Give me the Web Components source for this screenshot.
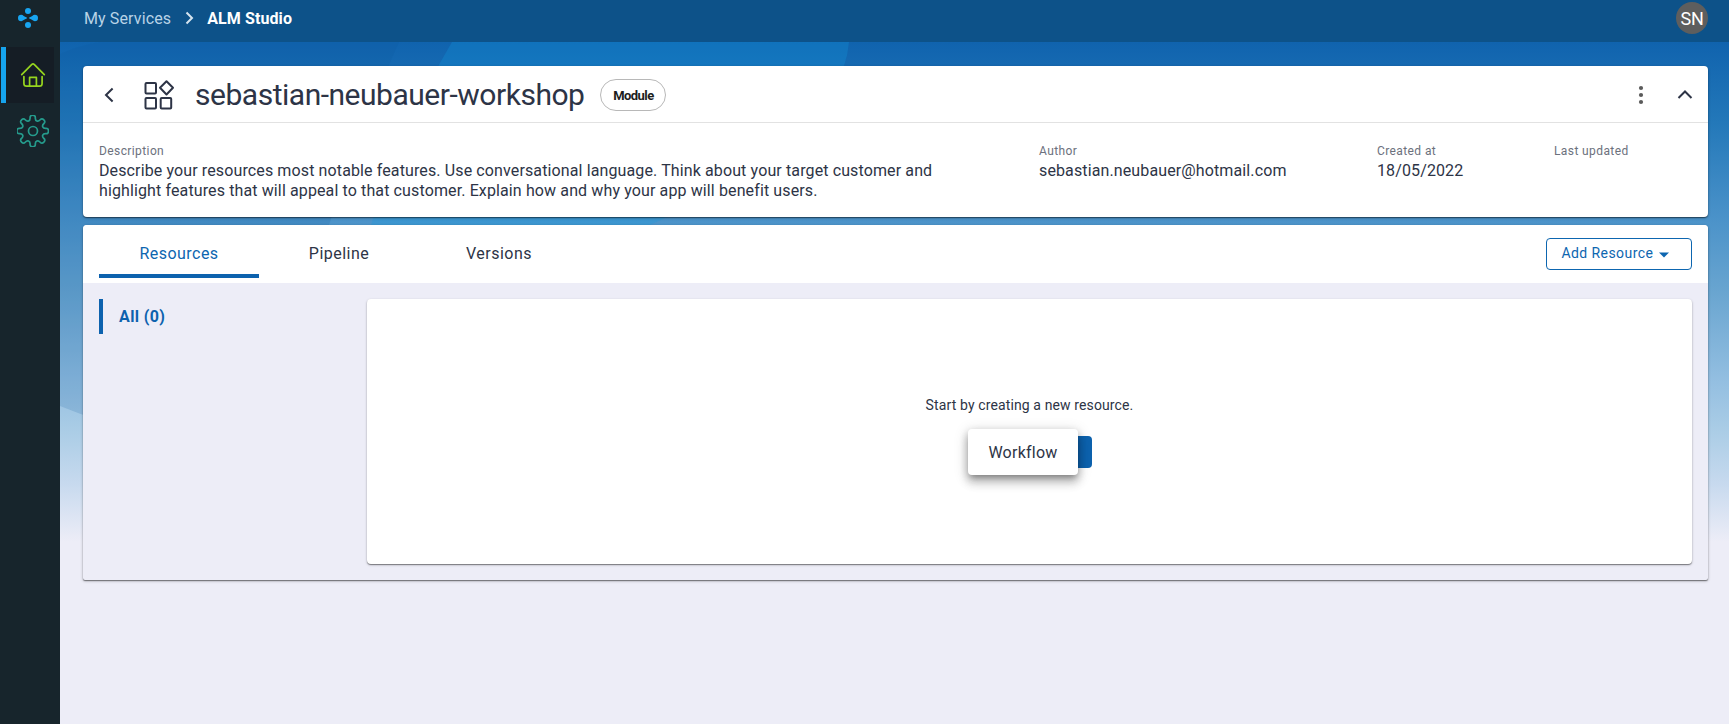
<!DOCTYPE html>
<html lang="en"><head><meta charset="utf-8"><title>ALM Studio</title>
<style>
html,body{margin:0;height:100%;overflow:hidden}
body{font-family:Roboto,"Liberation Sans",sans-serif;color:#2d3748;background:#ededf7}
</style></head><body>
<studio-app></studio-app>
<script>
const define=(name,html)=>customElements.define(name,class extends HTMLElement{
  constructor(){super();this.attachShadow({mode:'open'}).innerHTML='<style>*{box-sizing:border-box}svg{display:block}</style>'+html;}
});

define('side-nav',`<style>
:host{display:flex;flex-direction:column;width:60px;height:100%;background:#17252c;flex:none}
.logo{height:47px;padding:8px 0 0 18px}
.item{height:56px;margin-left:1px;width:53px;border-left:5px solid transparent;padding:12px 0 0 11px}
.on{background:#151d25;border-color:#16a4ee}
</style>
<div class="logo"><svg width="20" height="20" viewBox="0 0 20 20" fill="#18a5f1"><circle cx="10" cy="3" r="3"/><circle cx="10" cy="17" r="3"/><path d="M3.2 6.8C5 6.8 6.300 8.900 8.700 9.500Q9.400 10 8.700 10.500C6.300 11.100 5 13.200 3.200 13.200A3.200 3.200 0 0 1 3.200 6.800ZM16.800 6.800C15 6.800 13.700 8.900 11.300 9.500Q10.600 10 11.300 10.500C13.700 11.100 15 13.200 16.800 13.200A3.200 3.200 0 0 0 16.800 6.800Z"/></svg></div>
<div class="item on"><svg width="32" height="32" viewBox="0 0 32 32" fill="none" stroke="#96d51f" stroke-width="1.700" stroke-linecap="round" stroke-linejoin="round"><path d="M4.700 15.700L14.600 5.600Q16 4.300 17.400 5.600L27.300 15.700M6.900 17.500V24.500Q6.900 27.200 9.600 27.200H22.400Q25.100 27.200 25.100 24.500V17.500M12.600 27V18.400H19.400V27"/></svg></div>
<div class="item"><svg width="32" height="32" viewBox="0 0 32 32" fill="none" stroke="#259b8c" stroke-width="1.700" stroke-linejoin="round"><circle cx="16" cy="16" r="4.500"/><path id="g"/></svg></div>`);

define('crumb-bar',`<style>
:host{display:flex;align-items:center;height:42px;flex:none;background:#0d5289;padding:0 21px 6px 24px;color:#fff;font-size:16px}
.a{color:#b8d3e6;letter-spacing:.12px}.b{font-weight:700;letter-spacing:.1px}
svg{margin:0 13px 0 14px}
.av{margin-left:auto;width:32px;height:32px;border-radius:50%;background:#5e5e5e;font-size:18px;letter-spacing:-.3px;display:flex;align-items:center;justify-content:center}
</style><span class="a">My Services</span><svg width="9" height="14" viewBox="0 0 9 14" fill="none" stroke="#d5e4ef" stroke-width="2"><path d="M1.500 1.500L7 7L1.500 12.500"/></svg><span class="b">ALM Studio</span><span class="av">SN</span>`);

define('meta-field',`<style>
:host{display:block}
.l{font-size:12px;line-height:16px;letter-spacing:.4px;color:#6c717d}
.v{font-size:16px;line-height:20px;margin-top:2px;letter-spacing:.12px;color:#2d3446}
</style><div class="l"><slot name="label"></slot></div><div class="v"><slot></slot></div>`);

define('module-header',`<style>
:host{display:block;height:151px;background:#fff;border-radius:4px;box-shadow:0 1px 3px rgba(0,0,0,.3),0 1px 1px rgba(0,0,0,.4)}
.top{height:57px;border-bottom:1px solid #e2e2e2;display:flex;align-items:center;padding:2px 15px 0 20px}
h1{font-weight:400;font-size:30px;line-height:40px;margin:0 0 0 20px;letter-spacing:-.48px;color:#2d3446}
.chip{margin-left:16px;height:32px;width:66px;border:1px solid #b8b8b8;border-radius:16px;font-size:13px;font-weight:700;letter-spacing:-.55px;color:#1d1d1d;display:flex;align-items:center;justify-content:center}
.dots{margin-left:auto}
.meta{display:grid;grid-template-columns:940px 338px 177px 1fr;padding:20px 0 0 16px}
</style>
<div class="top"><svg width="13" height="16" viewBox="0 0 13 16" fill="none" stroke="#2d3446" stroke-width="2"><path d="M9.600 1.500L3 8L9.600 14.500"/></svg>
<svg style="margin-left:27px" width="32" height="32" viewBox="0 0 32 32" fill="none" stroke="#2d3446" stroke-width="2" stroke-linejoin="round"><rect x="2.500" y="4" width="10.500" height="10.500" rx="1"/><rect x="2.500" y="19" width="10.500" height="10.500" rx="1"/><rect x="17.700" y="19" width="10.500" height="10.500" rx="1"/><path d="M23.500 2.300L30 8.800L23.500 15.500L17 8.800Z"/></svg>
<h1>sebastian-neubauer-workshop</h1><span class="chip">Module</span>
<svg class="dots" width="6" height="20" viewBox="0 0 6 20" fill="#5a5a5a"><circle cx="3" cy="3" r="2.100"/><circle cx="3" cy="10" r="2.100"/><circle cx="3" cy="17" r="2.100"/></svg>
<svg style="margin-left:33px" width="16" height="12" viewBox="0 0 16 12" fill="none" stroke="#2d3446" stroke-width="2"><path d="M1.500 9L8 2.500L14.500 9"/></svg></div>
<div class="meta"><meta-field><span slot="label">Description</span>Describe your resources most notable features. Use conversational language. Think about your target customer and<br>highlight features that will appeal to that customer. Explain how and why your app will benefit users.</meta-field>
<meta-field><span slot="label">Author</span>sebastian.neubauer@hotmail.com</meta-field>
<meta-field><span slot="label">Created at</span>18/05/2022</meta-field>
<meta-field><span slot="label">Last updated</span></meta-field></div>`);

define('tab-item',`<style>
:host{box-sizing:border-box;display:flex;width:160px;height:53px;align-items:center;justify-content:center;font-size:16px;letter-spacing:.47px;color:#2d3446;border-bottom:4px solid transparent;padding-top:7px}
:host([active]){color:#0d66b0;border-color:#0d62ae}
</style><slot></slot>`);

define('resource-panel',`<style>
:host{display:flex;flex-direction:column;height:355px;border-radius:4px 4px 2px 2px;background:#ededf7;box-shadow:0 1px 3px rgba(0,0,0,.3),0 1px 1px rgba(0,0,0,.4)}
.tabs{height:58px;background:#fff;border-radius:4px 4px 0 0;display:flex;padding:0 16px}
.add{margin:13px 0 0 auto;width:146px;height:32px;border:1px solid #0d66b0;border-radius:4px;color:#0d66b0;font-size:14px;letter-spacing:.42px;display:flex;align-items:center;padding:0 0 2px 14.500px}
.add svg{margin:3px 0 0 6px}
.body{flex:1;display:flex;padding:16px;justify-content:space-between}
.all{height:35px;border-left:4px solid #0d62ae;padding-left:16px;color:#0d62ae;font-weight:700;font-size:16px;letter-spacing:.4px;line-height:35px}
.empty{width:1325px;height:265px;background:#fff;border-radius:4px;box-shadow:0 1px 3px rgba(0,0,0,.2),0 1px 1px rgba(0,0,0,.4);display:flex;flex-direction:column;align-items:center}
.t{margin-top:96px;font-size:14px;line-height:20px;letter-spacing:.12px;color:#2d3446}
.btn{position:relative;margin-top:21px;width:125px;height:32px;background:linear-gradient(90deg,#fff 3px,#0d62ae 3px);border-radius:4px}
.menu{position:absolute;left:1px;top:-7px;width:110px;height:46px;border-radius:4px;background:#fff;display:flex;align-items:center;justify-content:center;font-size:16px;letter-spacing:.25px;color:#2d3446;box-shadow:0 5px 5px -3px rgba(0,0,0,.2),0 8px 10px 1px rgba(0,0,0,.14),0 3px 14px 2px rgba(0,0,0,.12),0 3px 8px rgba(0,0,0,.2)}
</style>
<div class="tabs"><tab-item active>Resources</tab-item><tab-item>Pipeline</tab-item><tab-item>Versions</tab-item>
<div class="add">Add Resource<svg width="10" height="6" viewBox="0 0 10 6" fill="#0d66b0"><path d="M0 .5H10L5 5.500Z"/></svg></div></div>
<div class="body"><div class="all">All (0)</div><div class="empty"><div class="t">Start by creating a new resource.</div><div class="btn"><div class="menu">Workflow</div></div></div></div>`);

define('sky-backdrop',`<style>:host{display:block}</style>
<svg width="1669" height="500" viewBox="60 42 1669 500" preserveAspectRatio="none"><defs><linearGradient id="s" x1="0" y1="0" x2="0" y2="1"><stop offset="0" stop-color="#1063ae"/><stop offset=".16" stop-color="#2378b9"/><stop offset=".35" stop-color="#4a92c9"/><stop offset=".5" stop-color="#69a5d0"/><stop offset=".68" stop-color="#94bfe1"/><stop offset=".78" stop-color="#abcde6"/><stop offset=".88" stop-color="#c6d9ee"/><stop offset="1" stop-color="#ededf7"/></linearGradient></defs>
<rect x="60" y="42" width="1669" height="500" fill="url(#s)"/>
<path d="M60 54Q80 45 100 42H399Q355 140 329 225L260 440Q140 440 60 406Z" fill="#0b5a9e" fill-opacity=".16"/>
<path d="M452 42H849Q845 95 780 150Q720 195 650 225H371Q400 130 452 42Z" fill="#149be0" fill-opacity=".27"/></svg>`);

define('studio-app',`<style>
:host{display:flex;height:724px;width:100%;background:#ededf7}
.main{flex:1;display:flex;flex-direction:column;position:relative;min-width:0}
sky-backdrop{position:absolute;left:0;top:42px;z-index:0}
.content{position:relative;display:flex;flex-direction:column;gap:8px;padding:24px 21px 0 23px}
</style><side-nav></side-nav><div class="main"><sky-backdrop></sky-backdrop><crumb-bar></crumb-bar><div class="content"><module-header></module-header><resource-panel></resource-panel></div></div>`);

// Eight-toothed gear outline, smoothed through quadratic midpoints.
(()=>{const pts=[];for(let i=0;i<8;i++)for(const [o,r] of [[-10,16],[10,16],[13,11],[32,11]]){const a=(i*45+o)*Math.PI/180;pts.push([15.7+r*Math.sin(a),16-r*Math.cos(a)]);}
const mid=(a,b)=>[(a[0]+b[0])/2,(a[1]+b[1])/2];let d='M'+mid(pts[31],pts[0]);
pts.forEach((p,i)=>d+='Q'+p+' '+mid(p,pts[(i+1)%32]));
document.querySelector('studio-app').shadowRoot.querySelector('side-nav').shadowRoot.getElementById('g').setAttribute('d',d+'Z');})();
</script></body></html>
